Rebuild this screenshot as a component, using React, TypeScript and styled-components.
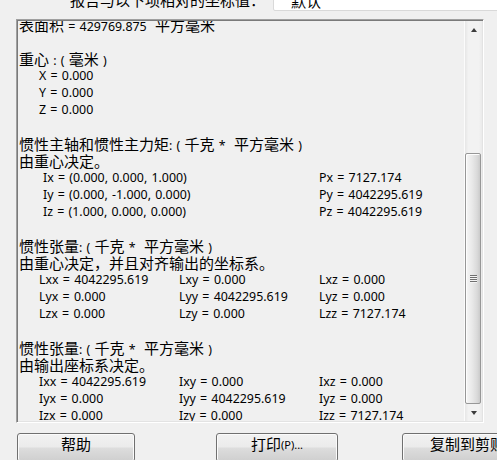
import React from "react"
import styled, { createGlobalStyle } from "styled-components"

const GlobalStyle = createGlobalStyle`
  html, body {
    margin: 0;
    padding: 0;
    background: #f0f0f0;
    overflow: hidden;
  }
  body {
    font-family: "Noto Sans", "Noto Sans CJK SC", sans-serif;
    font-size: 12.4px;
    word-spacing: 1px;
    color: #000;
  }
`

const zhRun = /([\u2e80-\u9fff\u3000-\u303f\uff00-\uffef]+)/

// wrap CJK runs so they get the larger dialog size, like the Windows fallback font
const mixed = (text: string) =>
  text.split(zhRun).map((part, i) => (i % 2 === 1 ? <Zh key={i}>{part}</Zh> : part))

type Entry =
  | { kind: "text"; text: string }
  | { kind: "blank" }
  | { kind: "row"; indent: number; cols: string; cells: string[] }

const xyz = { indent: 20, cols: "auto" }
const axes = { indent: 24, cols: "276px auto" }
const tensor = { indent: 20, cols: "140px 140px auto" }

const lines: Entry[] = [
  { kind: "text", text: "表面积 = 429769.875  平方毫米" },
  { kind: "blank" },
  { kind: "text", text: "重心 : ( 毫米 )" },
  { kind: "row", ...xyz, cells: ["X = 0.000"] },
  { kind: "row", ...xyz, cells: ["Y = 0.000"] },
  { kind: "row", ...xyz, cells: ["Z = 0.000"] },
  { kind: "blank" },
  { kind: "text", text: "惯性主轴和惯性主力矩: ( 千克 *  平方毫米 )" },
  { kind: "text", text: "由重心决定。" },
  { kind: "row", ...axes, cells: ["Ix = (0.000, 0.000, 1.000)", "Px = 7127.174"] },
  { kind: "row", ...axes, cells: ["Iy = (0.000, -1.000, 0.000)", "Py = 4042295.619"] },
  { kind: "row", ...axes, cells: ["Iz = (1.000, 0.000, 0.000)", "Pz = 4042295.619"] },
  { kind: "blank" },
  { kind: "text", text: "惯性张量: ( 千克 *  平方毫米 )" },
  { kind: "text", text: "由重心决定，并且对齐输出的坐标系。" },
  { kind: "row", ...tensor, cells: ["Lxx = 4042295.619", "Lxy = 0.000", "Lxz = 0.000"] },
  { kind: "row", ...tensor, cells: ["Lyx = 0.000", "Lyy = 4042295.619", "Lyz = 0.000"] },
  { kind: "row", ...tensor, cells: ["Lzx = 0.000", "Lzy = 0.000", "Lzz = 7127.174"] },
  { kind: "blank" },
  { kind: "text", text: "惯性张量: ( 千克 *  平方毫米 )" },
  { kind: "text", text: "由输出座标系决定。" },
  { kind: "row", ...tensor, cells: ["Ixx = 4042295.619", "Ixy = 0.000", "Ixz = 0.000"] },
  { kind: "row", ...tensor, cells: ["Iyx = 0.000", "Iyy = 4042295.619", "Iyz = 0.000"] },
  { kind: "row", ...tensor, cells: ["Izx = 0.000", "Izy = 0.000", "Izz = 7127.174"] },
]

const App = () => (
  <>
    <GlobalStyle />
    <Page>
      <Header>
        <HeaderLabel>{mixed("报告与以下项相对的坐标值：")}</HeaderLabel>
        <Combo>{mixed("默认")}</Combo>
      </Header>

      <ResultBox>
        <Content>
          <Scrolled>
            {lines.map((line, i) => {
              if (line.kind === "blank") return <Line key={i} />
              if (line.kind === "text") return <Line key={i}>{mixed(line.text)}</Line>
              return (
                <Row key={i} $indent={line.indent} $cols={line.cols}>
                  {line.cells.map((c) => (
                    <span key={c}>{c}</span>
                  ))}
                </Row>
              )
            })}
          </Scrolled>
        </Content>
        <ScrollBar>
          <ArrowButton>
            <Arrow $dir="up" />
          </ArrowButton>
          <Track>
            <Thumb $height={251}>
              <Grip>
                <GripLine />
                <GripLine />
                <GripLine />
                <GripLine />
              </Grip>
            </Thumb>
          </Track>
          <ArrowButton>
            <Arrow $dir="down" />
          </ArrowButton>
        </ScrollBar>
      </ResultBox>

      <ButtonRow>
        <Button $width={118} $left={0}>{mixed("帮助")}</Button>
        <Button $width={122} $left={81}>{mixed("打印(P)...")}</Button>
        <Button $width={146} $left={64}>{mixed("复制到剪贴板")}</Button>
      </ButtonRow>
    </Page>
  </>
)

const Page = styled.div`
  display: flex;
  flex-direction: column;
  padding-left: 16px;
`

const Zh = styled.span`
  display: inline-block;
  height: 17px;
  line-height: 17px;
  font-family: "Noto Sans CJK SC", sans-serif;
  font-size: 15px;
  word-spacing: 0;
`

const Header = styled.div`
  display: flex;
  align-items: center;
  height: 20px;
  margin-top: -9px;
`

const HeaderLabel = styled.div`
  width: 203px;
  padding-left: 54px;
  white-space: nowrap;
  line-height: 20px;
`

const Combo = styled.div`
  flex: 1;
  height: 20px;
  box-sizing: border-box;
  margin-right: -10px;
  padding-left: 17px;
  line-height: 18px;
  background: #fff;
  border: 1px solid #d9d9d9;
  border-radius: 2px;
`

const ResultBox = styled.div`
  display: flex;
  width: 468px;
  height: 404px;
  margin-top: 8px;
  box-sizing: border-box;
  border: 1px solid;
  border-color: #a0a0a0 #ffffff #ffffff #a0a0a0;
  box-shadow: inset 1px 1px 0 #7a7a7a, inset -1px -1px 0 #e3e3e3;
  padding: 1px;
`

const Content = styled.div`
  flex: 1;
  overflow: hidden;
  padding-left: 1px;
`

const Scrolled = styled.div`
  margin-top: -5px;
`

const Line = styled.div`
  height: 17px;
  line-height: 17px;
  white-space: pre;
`

const Row = styled.div<{ $indent: number; $cols: string }>`
  display: grid;
  grid-template-columns: ${(p) => p.$cols};
  height: 17px;
  line-height: 17px;
  padding-left: ${(p) => p.$indent}px;
  white-space: pre;
`

const ScrollBar = styled.div`
  display: flex;
  flex-direction: column;
  width: 17px;
  background: linear-gradient(to right, #e6e6e6, #f2f2f2 20%, #f2f2f2 80%, #ebebeb);
  border-left: 1px solid #fbfbfb;
`

const ArrowButton = styled.div`
  display: flex;
  align-items: center;
  justify-content: center;
  height: 17px;
`

const Arrow = styled.span<{ $dir: "up" | "down" }>`
  width: 0;
  height: 0;
  border-left: 3px solid transparent;
  border-right: 3px solid transparent;
  ${(p) =>
    p.$dir === "up" ? "border-bottom: 4px solid #3c3c3c;" : "border-top: 4px solid #3c3c3c;"}
`

const Track = styled.div`
  flex: 1;
  display: flex;
  flex-direction: column;
  justify-content: flex-end;
  padding: 0 1px 0 0;
`

const Thumb = styled.div<{ $height: number }>`
  height: ${(p) => p.$height}px;
  box-sizing: border-box;
  display: flex;
  align-items: center;
  justify-content: center;
  border: 1px solid #979797;
  border-radius: 2px;
  background: linear-gradient(to right, #f6f6f6, #e8e8e8 45%, #d9d9d9 80%, #cacaca);
  box-shadow: inset 1px 1px 0 #fdfdfd;
`

const Grip = styled.div`
  display: flex;
  flex-direction: column;
  gap: 1px;
`

const GripLine = styled.div`
  width: 7px;
  height: 1px;
  background: #6f6f6f;
  box-shadow: 0 1px 0 #f4f4f4;
`

const ButtonRow = styled.div`
  display: flex;
  margin-top: 10px;
  padding-left: 1px;
`

const Button = styled.div<{ $width: number; $left: number }>`
  flex: none;
  width: ${(p) => p.$width}px;
  margin-left: ${(p) => p.$left}px;
  height: 29px;
  box-sizing: border-box;
  display: flex;
  justify-content: center;
  padding-top: 1px;
  line-height: 20px;
  font-size: 11px;
  word-spacing: 0;
  border: 1px solid #707070;
  border-radius: 3px;
  background: linear-gradient(#f2f2f2 0%, #ebebeb 48%, #dddddd 52%, #cfcfcf 100%);
  box-shadow: inset 0 0 0 1px #fbfbfb;
  white-space: nowrap;
`

export default App
